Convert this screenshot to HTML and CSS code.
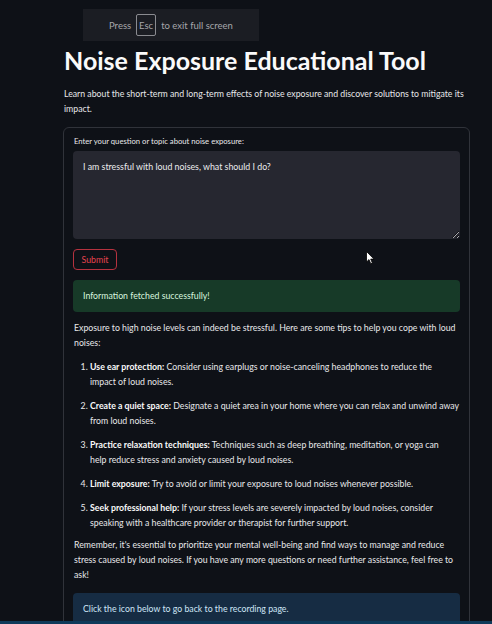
FILE: index.html
```html
<!DOCTYPE html>
<html lang="en">
<head>
<meta charset="utf-8">
<title>Noise Exposure Educational Tool</title>
<link rel="stylesheet" href="styles.css">
</head>
<body>
<div class="esc-hint">Press <kbd>Esc</kbd> to exit full screen</div>
<main class="page">
  <h1 class="title">Noise Exposure Educational Tool</h1>
  <p class="intro">Learn about the short-term and long-term effects of noise exposure and discover solutions to mitigate its impact.</p>
  <section class="form">
    <label class="field-label" for="q">Enter your question or topic about noise exposure:</label>
    <textarea id="q" class="field">I am stressful with loud noises, what should I do?</textarea>
    <button class="submit" type="button">Submit</button>
    <div class="alert success">Information fetched successfully!</div>
    <p class="text">Exposure to high noise levels can indeed be stressful. Here are some tips to help you cope with loud noises:</p>
    <ol class="tips">
      <li><strong>Use ear protection:</strong> Consider using earplugs or noise-canceling headphones to reduce the impact of loud noises.</li>
      <li><strong>Create a quiet space:</strong> Designate a quiet area in your home where you can relax and unwind away from loud noises.</li>
      <li><strong>Practice relaxation techniques:</strong> Techniques such as deep breathing, meditation, or yoga can help&nbsp;reduce stress and anxiety caused by loud noises.</li>
      <li><strong>Limit exposure:</strong> Try to avoid or limit your exposure to loud noises whenever possible.</li>
      <li><strong>Seek professional help:</strong> If your stress levels are severely impacted by loud noises, consider speaking with a healthcare provider or therapist for further support.</li>
    </ol>
    <p class="text">Remember, it's essential to prioritize your mental well-being and find ways to manage and reduce stress caused by loud noises. If you have any more questions or need further assistance, feel free to ask!</p>
    <div class="alert info">Click the icon below to go back to the recording page.</div>
  </section>
</main>
<svg class="cursor" width="9" height="14" viewBox="0 0 9 14"><path d="M0.5 0.5 L0.5 11 L3 8.6 L4.8 12.8 L6.4 12.1 L4.7 8.1 L8 8.1 Z" fill="#ffffff" stroke="#000000" stroke-width="0.8"/></svg>
<div class="taskbar"></div>
</body>
</html>
```
FILE: styles.css
```css
html, body {
  margin: 0;
  padding: 0;
  background: #0e1117;
  height: 624px;
  overflow: hidden;
}
body {
  font-family: Lato, "Noto Sans", sans-serif;
  color: #e8e8ea;
  position: relative;
}
.esc-hint {
  position: absolute;
  left: 83px;
  top: 9px;
  width: 176px;
  height: 32px;
  box-sizing: border-box;
  background: #1b1d23;
  color: #a6a7ab;
  font-size: 9.5px;
  display: flex;
  align-items: center;
  padding-left: 26px;
  gap: 5px;
}
.esc-hint kbd {
  font-family: inherit;
  border: 1px solid #8a8b90;
  border-radius: 2px;
  height: 22px;
  width: 20px;
  padding: 0;
  justify-content: center;
  display: inline-flex;
  align-items: center;
  box-sizing: border-box;
}
.page {
  padding: 44px 22px 0 63px;
  width: 407px;
}
.title {
  margin: 0;
  font-size: 25px;
  line-height: 32px;
  font-weight: 700;
  color: #fafafa;
  padding-left: 1px;
}
.intro {
  margin: 10px 0 0;
  font-size: 8.73px;
  line-height: 15px;
  padding-left: 1px;
}
.form {
  margin-top: 11px;
  border: 1px solid #30333a;
  border-radius: 6px;
  padding: 7px 9px 20px;
  display: flex;
  flex-direction: column;
  font-size: 8.75px;
  line-height: 15px;
}
.field-label {
  font-size: 7.68px;
  line-height: 12px;
  padding-left: 1px;
}
.field {
  margin-top: 4px;
  height: 88px;
  box-sizing: border-box;
  background: #262730;
  border: none;
  border-radius: 4px;
  color: #ececee;
  font-family: inherit;
  font-size: 8.82px;
  line-height: 15px;
  padding: 8px 10px;
  resize: vertical;
  outline: none;
}
.submit {
  margin-top: 10px;
  align-self: flex-start;
  width: 44px;
  height: 21px;
  box-sizing: border-box;
  background: transparent;
  border: 1px solid #b5323f;
  border-radius: 4px;
  color: #e4434e;
  font-family: inherit;
  font-size: 8.8px;
  padding: 0;
}
.alert {
  border-radius: 4px;
  padding: 8px 10px;
}
.success {
  margin-top: 10px;
  background: #173a28;
  color: #d8f5df;
  height: 32px;
  box-sizing: border-box;
}
.text {
  margin: 8px 0 0;
  padding-left: 1px;
}
.tips {
  margin: 9px 0 0;
  padding-left: 17px;
  display: flex;
  flex-direction: column;
  gap: 9px;
}
.tips strong {
  font-weight: 700;
  color: #fafafa;
}
.tips + .text {
  margin-top: 7px;
}
.info {
  margin-top: 11px;
  background: #162c43;
  color: #cfe6f7;
  height: 40px;
}
.cursor {
  position: absolute;
  left: 366px;
  top: 251px;
}
.taskbar {
  position: absolute;
  left: 0;
  right: 0;
  bottom: 0;
  height: 3px;
  background: #0f3a5a;
}
```
